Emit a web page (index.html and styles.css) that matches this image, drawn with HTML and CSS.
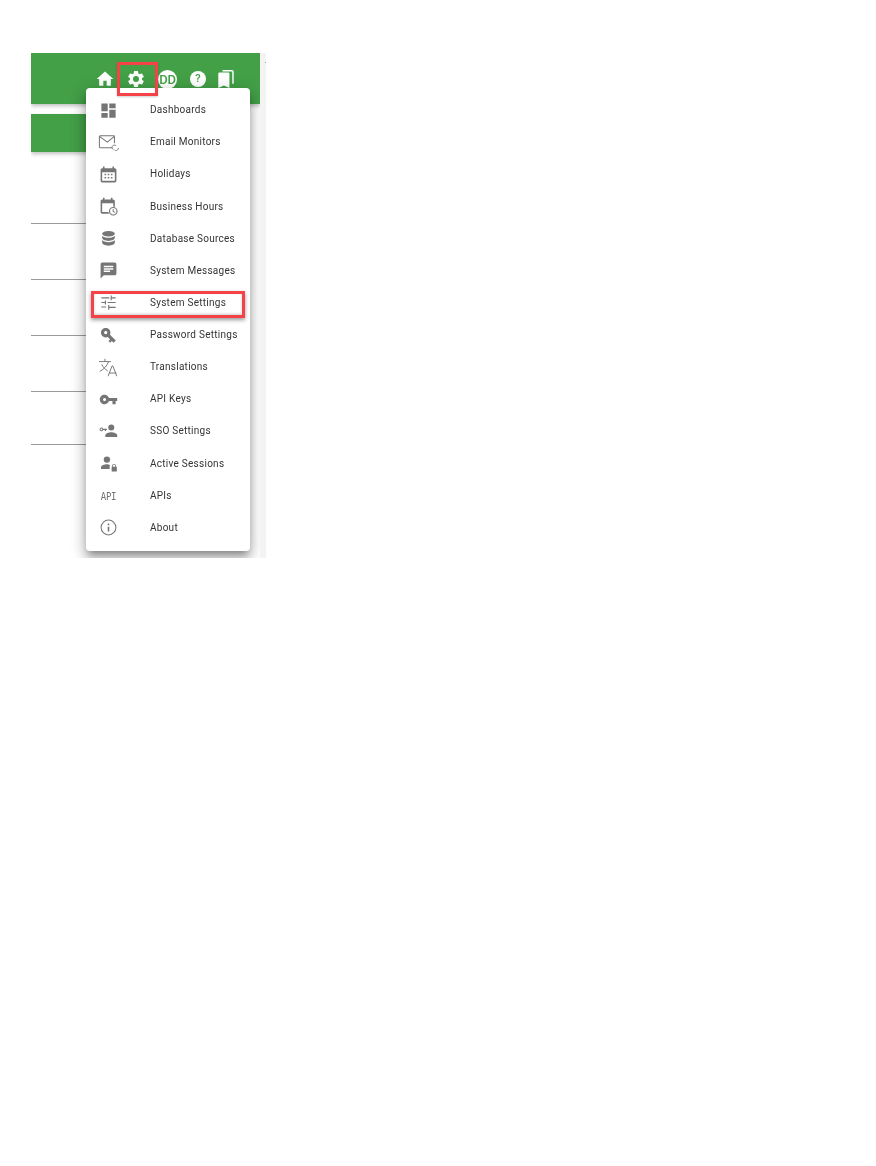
FILE: index.html
```html
<!DOCTYPE html>
<html lang="en">
<head>
<meta charset="utf-8">
<title>System Settings menu</title>
<link rel="stylesheet" href="styles.css">
</head>
<body>
<div class="shot">
  <div class="app">
    <header class="topbar">
      <svg class="tb-icon home" viewBox="0 0 24 24"><path d="M10 20v-6h4v6h5v-8h3L12 3 2 12h3v8z"/></svg>
      <svg class="tb-icon gear" viewBox="0 0 24 24"><path d="M19.14 12.94c.04-.3.06-.61.06-.94s-.02-.64-.07-.94l2.03-1.58a.49.49 0 0 0 .12-.61l-1.92-3.32a.49.49 0 0 0-.59-.22l-2.39.96a7 7 0 0 0-1.62-.94l-.36-2.54a.48.48 0 0 0-.48-.41h-3.84a.48.48 0 0 0-.47.41l-.36 2.54c-.59.24-1.13.57-1.62.94l-2.39-.96a.48.48 0 0 0-.59.22L2.74 8.87a.48.48 0 0 0 .12.61l2.03 1.58c-.05.3-.09.63-.09.94s.02.64.07.94l-2.03 1.58a.49.49 0 0 0-.12.61l1.92 3.32c.12.22.37.29.59.22l2.39-.96c.5.38 1.03.7 1.62.94l.36 2.54c.05.24.24.41.48.41h3.84c.24 0 .44-.17.47-.41l.36-2.54c.59-.24 1.13-.56 1.62-.94l2.39.96c.22.08.47 0 .59-.22l1.92-3.32a.48.48 0 0 0-.12-.61zM12 15.6a3.6 3.6 0 1 1 0-7.2 3.6 3.6 0 0 1 0 7.2z"/></svg>
      <span class="avatar">DD</span>
      <span class="help">?</span>
      <svg class="tb-icon book" viewBox="0 0 18 21"><path d="M5 0h11a2 2 0 0 1 2 2v14h-1.700V1.700H5z"/><path d="M1.500 3h10a1.500 1.500 0 0 1 1.500 1.500V21l-6.500-3L0 21V4.500A1.500 1.500 0 0 1 1.500 3z"/></svg>
    </header>
    <div class="subbar"></div>
    <div class="rows">
      <div class="row r1"></div>
      <div class="row r2"></div>
      <div class="row r2"></div>
      <div class="row r2"></div>
      <div class="row r3"></div>
    </div>
    <nav class="menu">
      <a class="item"><svg viewBox="0 0 24 24"><path d="M3 13h8V3H3zm0 8h8v-6H3zm10 0h8V11h-8zm0-18v6h8V3z"/></svg><span>Dashboards</span></a>
      <a class="item"><svg viewBox="0 0 24 24" class="line"><path d="M16.500 18.500H1.500a1 1 0 0 1-1-1V4.500a1 1 0 0 1 1-1h17a1 1 0 0 1 1 1v8.500M1 4.500l9.500 7 8.500-7"/><path class="thin-stroke" d="M18.200 21a3 3 0 0 1 2.500-5.500l1 .5M24.500 19a3 3 0 0 1-3.800 3l-1-.6"/></svg><span>Email Monitors</span></a>
      <a class="item"><svg viewBox="0 0 24 24"><path d="M20 4h-1V2h-2v2H7V2H5v2H4a2 2 0 0 0-2 2v14a2 2 0 0 0 2 2h16a2 2 0 0 0 2-2V6a2 2 0 0 0-2-2zm0 16H4V9h16zM7 11h2v2H7zm4 0h2v2h-2zm4 0h2v2h-2zm-8 4h2v2H7zm4 0h2v2h-2zm4 0h2v2h-2z"/></svg><span>Holidays</span></a>
      <a class="item"><svg viewBox="0 0 24 24"><path d="M18 3h-1V1h-2v2H7V1H5v2H4a2 2 0 0 0-2 2v14a2 2 0 0 0 2 2h8.500a6 6 0 0 1-.5-2H4V8h14v4.100a6 6 0 0 1 2 .5V5a2 2 0 0 0-2-2z"/><path fill-rule="evenodd" d="M18 12.500a5.500 5.500 0 1 0 0 11 5.500 5.500 0 0 0 0-11zm0 1.500a4 4 0 1 1 0 8 4 4 0 0 1 0-8zM17.300 15.300v3.200l2.700 1.400.5-1-2-1v-2.600z"/></svg><span>Business Hours</span></a>
      <a class="item"><svg viewBox="0 0 24 24"><ellipse cx="12" cy="6" rx="8" ry="3.500"/><path d="M4 8.500v3c0 1.900 3.600 3.500 8 3.500s8-1.600 8-3.500v-3c-1.500 1.800-4.500 2.700-8 2.700s-6.500-.9-8-2.700zM4 14v3.500C4 19.400 7.600 21 12 21s8-1.600 8-3.500V14c-1.500 1.800-4.500 2.700-8 2.700S5.500 15.800 4 14z"/></svg><span>Database Sources</span></a>
      <a class="item"><svg viewBox="0 0 24 24"><path d="M20 2H4a2 2 0 0 0-2 2v18l4-4h14a2 2 0 0 0 2-2V4a2 2 0 0 0-2-2zm-6 12H6v-2h8zm4-3H6V9h12zm0-3H6V6h12z"/></svg><span>System Messages</span></a>
      <a class="item"><svg viewBox="0 0 24 24"><path d="M3 17v1.400h6V17zM3 5.500v1.400h10V5.500zm10 15.500v-2.200h8v-1.400h-8v-2.200h-1.400V21zM7.400 9.500v1.800H3v1.400h4.400v1.800h1.400v-5zM21 12.700v-1.400H11v1.400zm-6.300-3.700h1.400V6.900H21V5.500h-4.900V3.300h-1.400z"/></svg><span>System Settings</span></a>
      <a class="item"><svg viewBox="0 0 24 24"><path transform="rotate(45 12 12)" d="M12.650 10C11.830 7.670 9.610 6 7 6c-3.310 0-6 2.690-6 6s2.690 6 6 6c2.610 0 4.830-1.670 5.650-4H17v3h3v-3h3v-4H12.650zM7 14c-1.100 0-2-.9-2-2s.9-2 2-2 2 .9 2 2-.9 2-2 2z"/></svg><span>Password Settings</span></a>
      <a class="item"><svg viewBox="0 0 24 24" class="line thin"><path d="M0 4.500h15M7.500 1v3.500M12 4.500C10.500 9.500 6.500 14 1 17M3.500 8c1.500 3.500 4 6 7.500 8.500M11.500 23l5-13h1l5 13M13 19h9"/></svg><span>Translations</span></a>
      <a class="item"><svg viewBox="0 0 24 24"><path d="M12.650 10C11.830 7.670 9.610 6 7 6c-3.310 0-6 2.690-6 6s2.690 6 6 6c2.610 0 4.830-1.670 5.650-4H17v4h4v-4h2v-4H12.650zM7 14c-1.100 0-2-.9-2-2s.9-2 2-2 2 .9 2 2-.9 2-2 2z"/></svg><span>API Keys</span></a>
      <a class="item"><svg viewBox="0 0 24 24"><circle cx="15.500" cy="7" r="3.800"/><path d="M15.500 13c-3 0-7.500 1.300-7.500 4v2h15v-2c0-2.700-4.500-4-7.500-4z"/><path fill-rule="evenodd" d="M3 8a2.300 2.300 0 0 1 2.200 1.500H10V11H8.800v1.300H7.300V11H5.200A2.300 2.300 0 1 1 3 8zm0 1.200a1.100 1.100 0 1 0 0 2.200 1.100 1.100 0 0 0 0-2.200z" transform="translate(0 -1)"/></svg><span>SSO Settings</span></a>
      <a class="item"><svg viewBox="0 0 24 24"><circle cx="10" cy="7" r="4"/><path d="M10 13c-3 0-7.500 1.500-7.500 4v2h11v-3.500c0-.6.200-1 .4-1.300-1.300-.9-2.900-1.200-3.900-1.200z"/><path d="M21.500 16v-1a2.500 2.500 0 0 0-5 0v1H16v6h6.500v-6zm-1 0h-3v-1a1.500 1.500 0 0 1 3 0z"/></svg><span>Active Sessions</span></a>
      <a class="item"><span class="api">API</span><span>APIs</span></a>
      <a class="item"><svg viewBox="0 0 24 24"><path d="M11 7h2v2h-2zm0 4h2v6h-2zm1-9a10 10 0 1 0 0 20 10 10 0 0 0 0-20zm0 18.700a8.700 8.700 0 1 1 0-17.400 8.700 8.700 0 0 1 0 17.400z"/></svg><span>About</span></a>
    </nav>
    <div class="mark gear-mark"></div>
    <div class="mark settings-mark"></div>
  </div>
  <aside class="edge"><i class="speck"></i></aside>
</div>
</body>
</html>
```
FILE: styles.css
```css
* { box-sizing: border-box; }
html, body { margin: 0; background: #fff; }
body { padding: 53px 0 0 31px; font-family: Roboto, "Liberation Sans", sans-serif; height: 1166px; overflow: hidden; }

.shot { display: flex; width: 235px; height: 505px; background: #fff; overflow: hidden; filter: blur(.3px); }
.app { position: relative; width: 229px; height: 505px; flex: none; }
.edge { position: relative; width: 6px; background: #f3f3f3; flex: none; }
.speck { position: absolute; left: 5px; top: 9px; width: 1px; height: 1px; background: #999; }

.topbar {
  height: 51px;
  background: #43a047;
  display: flex;
  align-items: flex-start;
  padding: 16px 0 0 64px;
  box-shadow: 0 2px 4px rgba(0,0,0,.25);
}
.tb-icon { fill: #fff; display: block; flex: none; }
.home { width: 20px; height: 20px; }
.gear { width: 20px; height: 20px; margin-left: 11px; }
.avatar {
  margin-left: 12px; width: 19px; height: 19px; border-radius: 50%; margin-top: 1px;
  background: #fff; color: #43a047; font-size: 13px; font-weight: 500;
  line-height: 19px; text-align: center; letter-spacing: -.2px; flex: none;
}
.help {
  margin-left: 13px; width: 16px; height: 16px; margin-top: 2px; border-radius: 50%;
  background: #fff; color: #43a047; font-size: 11px; font-weight: 500;
  line-height: 16px; text-align: center; flex: none;
}
.book { width: 16px; height: 18px; margin-left: 12px; margin-top: 1px; }

.subbar {
  width: 60px; height: 38px; margin-top: 10px; background: #43a047;
  box-shadow: 0 2px 4px rgba(0,0,0,.25);
}
.rows { display: flex; flex-direction: column; width: 60px; }
.row { border-bottom: 1px solid #9a9a9a; }
.r1 { height: 72px; }
.r2 { height: 56px; }
.r3 { height: 53px; }

.menu {
  position: absolute; left: 55px; top: 35px; width: 164px; height: 463px;
  background: #fff; border-radius: 4px;
  padding: 5.625px 0 0;
  box-shadow: 0 5px 6px -3px rgba(0,0,0,.3), 0 9px 12px 1px rgba(0,0,0,.18), 0 3px 16px 2px rgba(0,0,0,.16);
}
.item { display: flex; align-items: center; height: 32.125px; color: #333; font-size: 10px; letter-spacing: .26px; }
.item svg { width: 19px; height: 19px; margin: 1px 0 0 13px; fill: #757575; flex: none; }
.item svg.line { fill: none; stroke: #757575; stroke-width: 1.300; overflow: visible; }
.item svg.thin { stroke-width: 1.200; }
.item svg .thin-stroke { stroke-width: 1.100; }
.item > span:last-child { margin-left: 32px; }
.item .api {
  width: 19px; margin: 1px 0 0 13px; color: #757575;
  font-family: "DejaVu Sans Mono", monospace; font-size: 9px; letter-spacing: -.2px; text-align: center; flex: none;
  transform: scaleY(1.200);
}

.mark { position: absolute; border: 3px solid #f44248; }
.gear-mark { left: 86px; top: 9px; width: 41px; height: 34px; box-shadow: 0 1px 2px rgba(0,0,0,.2); }
.settings-mark { left: 60px; top: 238px; width: 154px; height: 27px; box-shadow: 0 2px 4px rgba(0,0,0,.4), inset 0 -1px 3px rgba(0,0,0,.2); }
```
